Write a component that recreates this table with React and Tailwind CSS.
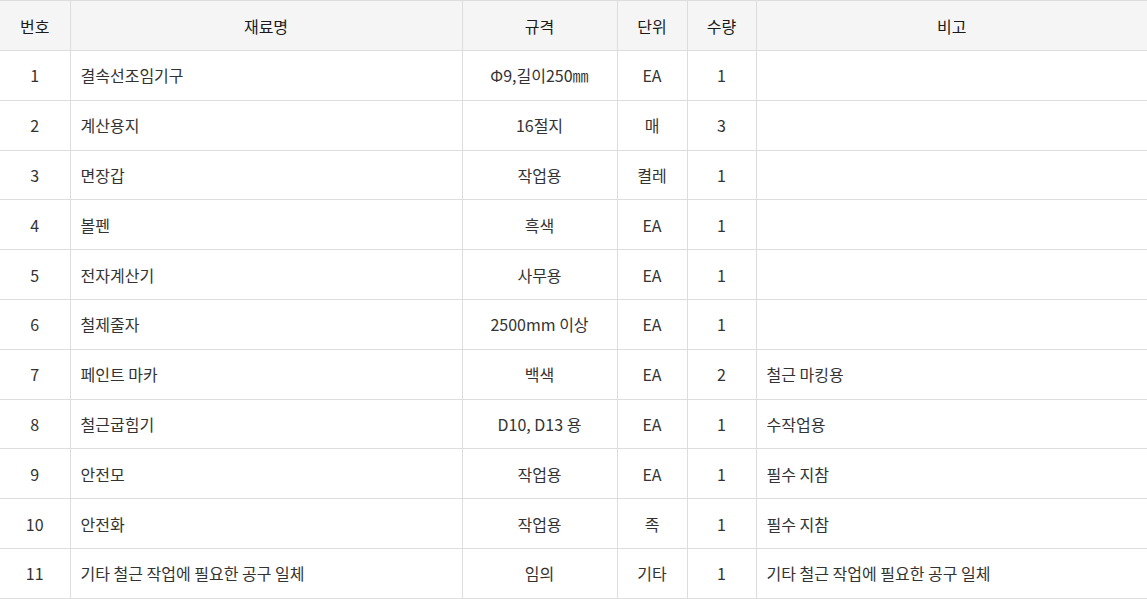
const rows = [
  ['1', '결속선조임기구', 'Φ9,길이250㎜', 'EA', '1', ''],
  ['2', '계산용지', '16절지', '매', '3', ''],
  ['3', '면장갑', '작업용', '켤레', '1', ''],
  ['4', '볼펜', '흑색', 'EA', '1', ''],
  ['5', '전자계산기', '사무용', 'EA', '1', ''],
  ['6', '철제줄자', '2500mm 이상', 'EA', '1', ''],
  ['7', '페인트 마카', '백색', 'EA', '2', '철근 마킹용'],
  ['8', '철근굽힘기', 'D10, D13 용', 'EA', '1', '수작업용'],
  ['9', '안전모', '작업용', 'EA', '1', '필수 지참'],
  ['10', '안전화', '작업용', '족', '1', '필수 지참'],
  ['11', '기타 철근 작업에 필요한 공구 일체', '임의', '기타', '1', '기타 철근 작업에 필요한 공구 일체'],
]

export default function App() {
  return (
    <div className="w-[1147px] bg-white" style={{ fontFamily: '"Noto Sans CJK KR", "Noto Sans", sans-serif' }}>
      <table className="w-full border-collapse table-fixed text-[16px] text-[#333]">
        <colgroup>
          <col className="w-[70px]" />
          <col className="w-[392px]" />
          <col className="w-[155px]" />
          <col className="w-[70px]" />
          <col className="w-[69px]" />
          <col />
        </colgroup>
        <thead>
          <tr className="h-[50px] bg-[#f5f5f5] border-t border-b border-[#dddddd]">
            <th className="font-normal text-[#1a1a1a] border-r border-[#dddddd]">번호</th>
            <th className="font-normal text-[#1a1a1a] border-r border-[#dddddd]">재료명</th>
            <th className="font-normal text-[#1a1a1a] border-r border-[#dddddd]">규격</th>
            <th className="font-normal text-[#1a1a1a] border-r border-[#dddddd]">단위</th>
            <th className="font-normal text-[#1a1a1a] border-r border-[#dddddd]">수량</th>
            <th className="font-normal text-[#1a1a1a]">비고</th>
          </tr>
        </thead>
        <tbody>
          {rows.map((r) => (
            <tr key={r[0]} className="h-[49.8px] border-b border-[#dddddd]">
              <td className="text-center border-r border-[#dddddd]">{r[0]}</td>
              <td className="text-left pl-[10px] border-r border-[#dddddd]">{r[1]}</td>
              <td className="text-center border-r border-[#dddddd]">{r[2]}</td>
              <td className="text-center border-r border-[#dddddd]">{r[3]}</td>
              <td className="text-center border-r border-[#dddddd]">{r[4]}</td>
              <td className="text-left pl-[10px]">{r[5]}</td>
            </tr>
          ))}
        </tbody>
      </table>
    </div>
  )
}
